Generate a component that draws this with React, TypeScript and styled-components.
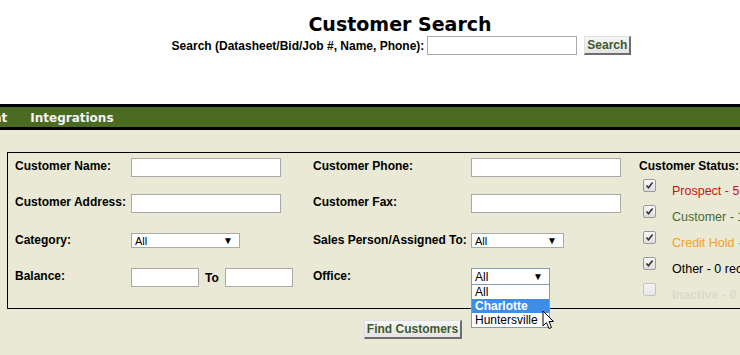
import React, { FC } from 'react'
import styled, { createGlobalStyle } from 'styled-components'

const GlobalStyle = createGlobalStyle`
  html, body {
    margin: 0;
    padding: 0;
    overflow: hidden;
  }
  body {
    background: #e9e9d5;
    font-family: 'Liberation Sans', Arial, sans-serif;
    font-size: 12px;
    color: #000;
  }
`

const Page = styled.div`
  width: 824px;
`

const Header = styled.header`
  width: 800px;
  height: 104px;
  background: #fff;
  padding-top: 13px;
  box-sizing: border-box;
  text-align: center;
`

const Title = styled.h1`
  margin: 0;
  font: bold 19px/22px 'DejaVu Sans', Verdana, sans-serif;
`

const SearchRow = styled.div`
  display: flex;
  justify-content: center;
  align-items: center;
  margin-top: 1px;
  padding-left: 3px;
`

const BoldLabel = styled.span`
  font-weight: bold;
  font-size: 12px;
  line-height: 14px;
  white-space: nowrap;
`

const FieldLabel = styled(BoldLabel)`
  padding-top: 1px;
`

const TextBox = styled.input<{ $width?: number }>`
  box-sizing: border-box;
  width: ${(p) => p.$width ?? 150}px;
  height: 19px;
  margin: 0;
  padding: 0 3px;
  border: 1px solid #a9a9a9;
  background: #fff;
  font: 12px 'Liberation Sans', Arial, sans-serif;
  outline: none;
`

const FlatButton = styled.button`
  box-sizing: border-box;
  height: 19px;
  margin: 0;
  padding: 0 2px;
  background: linear-gradient(#f6f6f6, #e4e4e4);
  border-style: solid;
  border-width: 1px 2px 2px 1px;
  border-color: #e0e0e0 #6e6e6e #6e6e6e #e0e0e0;
  color: #3c5a2c;
  font: bold 12px/14px 'Liberation Sans', Arial, sans-serif;
  cursor: pointer;
`

const Nav = styled.nav`
  display: flex;
  align-items: center;
  gap: 23px;
  height: 20px;
  background: #4b6b23;
  border-top: 3px solid #000;
  border-bottom: 3px solid #000;
  overflow: hidden;
`

const NavItem = styled.span<{ $clipped?: boolean }>`
  padding-top: 2px;
  font: bold 12px/18px 'DejaVu Sans', Verdana, sans-serif;
  color: #f4f4f4;
  white-space: nowrap;
  margin-left: ${(p) => (p.$clipped ? '-7px' : '0')};
`

const Fieldset = styled.div`
  display: flex;
  box-sizing: border-box;
  width: 809px;
  margin: 22px 0 0 7px;
  padding: 5px 0 0 7px;
  border: 1px solid #000;
`

const FieldGrid = styled.div`
  display: grid;
  grid-template-columns: 116px 182px 158px 168px;
  grid-template-rows: 36px 38px 36px 36px;
  align-items: start;
`

const Cell = styled.div`
  display: flex;
  align-items: center;
`

const ToLabel = styled(BoldLabel)`
  margin: 0 6px 0 6px;
`

const SelectWrap = styled.div<{ $width: number }>`
  position: relative;
  width: ${(p) => p.$width}px;
`

const SelectBox = styled.div<{ $open?: boolean }>`
  box-sizing: border-box;
  display: flex;
  align-items: center;
  justify-content: space-between;
  height: ${(p) => (p.$open ? 17 : 15)}px;
  margin-top: ${(p) => (p.$open ? 0 : 1)}px;
  padding: 0 6px 0 3px;
  background: #fff;
  border: 1px solid ${(p) => (p.$open ? '#7f9db9' : '#a9a9a9')};
  font-size: ${(p) => (p.$open ? 12 : 11)}px;
`

const Arrow = styled.span`
  font-size: 10px;
`

const OptionList = styled.ul`
  position: absolute;
  top: 100%;
  left: 0;
  right: 0;
  margin: 0;
  padding: 0;
  list-style: none;
  background: #fff;
  border: 1px solid #7f9db9;
  border-top: none;
`

const Option = styled.li<{ $active?: boolean }>`
  height: 14px;
  padding: 0 3px;
  font-size: 12px;
  line-height: 14px;
  white-space: nowrap;
  background: ${(p) => (p.$active ? '#3d8ee8' : '#fff')};
  color: ${(p) => (p.$active ? '#fff' : '#000')};
  font-weight: ${(p) => (p.$active ? 'bold' : 'normal')};
`

const Pointer = styled.svg`
  position: absolute;
  left: 70px;
  top: 25px;
`

const StatusColumn = styled.div`
  display: flex;
  flex-direction: column;
  white-space: nowrap;
`

const StatusList = styled.div`
  display: flex;
  flex-direction: column;
  margin-top: 5px;
`

const StatusRow = styled.label`
  display: flex;
  align-items: flex-start;
  height: 26px;
`

const CheckBox = styled.span<{ $checked: boolean }>`
  display: flex;
  align-items: center;
  justify-content: center;
  box-sizing: border-box;
  width: 13px;
  height: 13px;
  margin: 1px 0 0 4px;
  border: 1px solid ${(p) => (p.$checked ? '#9a9a9a' : '#c4c4c4')};
  border-radius: 2px;
  background: ${(p) =>
    p.$checked
      ? 'linear-gradient(#fafafa, #dcdcdc)'
      : 'linear-gradient(#f4f4f4, #e6e6e6)'};
`

const StatusText = styled.span<{ $color: string; $bold?: boolean }>`
  margin-left: 16px;
  padding-top: 6px;
  font-size: 12.5px;
  line-height: 14px;
  color: ${(p) => p.$color};
  font-weight: ${(p) => (p.$bold ? 'bold' : 'normal')};
`

const ButtonRow = styled.div`
  display: flex;
  justify-content: center;
  margin-top: 11px;
  padding-left: 2px;
`

const statuses = [
  { label: 'Prospect - 5 records', color: '#d01010', checked: true },
  { label: 'Customer - 112 records', color: '#4c6a30', checked: true },
  { label: 'Credit Hold - 0 records', color: '#f0a428', checked: true },
  { label: 'Other - 0 records', color: '#000', checked: true },
  { label: 'Inactive - 0 records', color: '#d9d9cc', checked: false, bold: true },
]

const Select: FC<{ width: number; open?: boolean }> = ({ width, open }) => (
  <SelectWrap $width={width}>
    <SelectBox $open={open}>
      <span>All</span>
      <Arrow>▼</Arrow>
    </SelectBox>
    {open && (
      <OptionList>
        <Option>All</Option>
        <Option $active>Charlotte</Option>
        <Option>Huntersville</Option>
        <Pointer width='13' height='20' viewBox='0 0 13 20'>
          <path
            d='M1 1 L1 16 L4.5 12.5 L7 18.5 L9.5 17.5 L7 11.5 L11.5 11.5 Z'
            fill='#fff'
            stroke='#000'
            strokeWidth='1'
            strokeLinejoin='round'
          />
        </Pointer>
      </OptionList>
    )}
  </SelectWrap>
)

const Check: FC<{ checked: boolean }> = ({ checked }) => (
  <CheckBox $checked={checked}>
    {checked && (
      <svg width='9' height='9' viewBox='0 0 9 9'>
        <path d='M1.5 4.5 L3.5 6.8 L7.6 1.6' fill='none' stroke='#333' strokeWidth='1.6' />
      </svg>
    )}
  </CheckBox>
)

const App: FC = () => (
  <Page>
    <GlobalStyle />
    <Header>
      <Title>Customer Search</Title>
      <SearchRow>
        <BoldLabel>Search (Datasheet/Bid/Job #, Name, Phone):</BoldLabel>
        <TextBox style={{ marginLeft: 3 }} />
        <FlatButton style={{ marginLeft: 7 }}>Search</FlatButton>
      </SearchRow>
    </Header>
    <Nav>
      <NavItem $clipped>nt</NavItem>
      <NavItem>Integrations</NavItem>
    </Nav>
    <Fieldset>
      <FieldGrid>
        <FieldLabel>Customer Name:</FieldLabel>
        <TextBox />
        <FieldLabel>Customer Phone:</FieldLabel>
        <TextBox />

        <FieldLabel>Customer Address:</FieldLabel>
        <TextBox />
        <FieldLabel>Customer Fax:</FieldLabel>
        <TextBox />

        <FieldLabel>Category:</FieldLabel>
        <Select width={109} />
        <FieldLabel>Sales Person/Assigned To:</FieldLabel>
        <Select width={93} />

        <FieldLabel>Balance:</FieldLabel>
        <Cell>
          <TextBox $width={68} />
          <ToLabel>To</ToLabel>
          <TextBox $width={68} />
        </Cell>
        <FieldLabel>Office:</FieldLabel>
        <Select width={79} open />
      </FieldGrid>
      <StatusColumn>
        <FieldLabel>Customer Status:</FieldLabel>
        <StatusList>
          {statuses.map((s) => (
            <StatusRow key={s.label}>
              <Check checked={s.checked} />
              <StatusText $color={s.color} $bold={s.bold}>
                {s.label}
              </StatusText>
            </StatusRow>
          ))}
        </StatusList>
      </StatusColumn>
    </Fieldset>
    <ButtonRow>
      <FlatButton>Find Customers</FlatButton>
    </ButtonRow>
  </Page>
)

export default App
